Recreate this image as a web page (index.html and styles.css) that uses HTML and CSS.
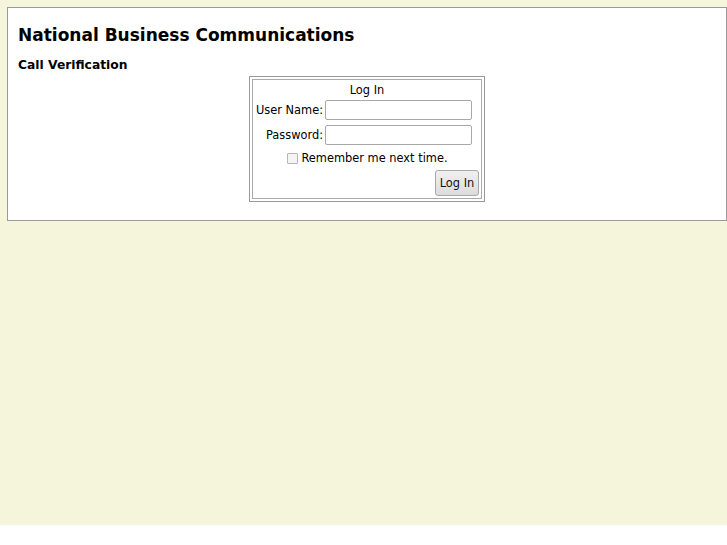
FILE: index.html
```html
<!DOCTYPE html>
<html>
<head>
<meta charset="utf-8">
<title>Call Verification</title>
<link rel="stylesheet" href="styles.css">
</head>
<body>
<div class="page">
  <div class="panel">
    <h1 class="title">National Business Communications</h1>
    <h2 class="subtitle">Call Verification</h2>
    <div class="login-wrap">
      <form class="login">
        <div class="login-inner">
          <div class="login-title">Log In</div>
          <label class="lbl" for="un">User Name:</label>
          <input class="field" id="un" type="text">
          <label class="lbl" for="pw">Password:</label>
          <input class="field" id="pw" type="password">
          <div class="remember"><span class="check"></span><span>Remember me next time.</span></div>
          <div class="actions"><button type="button" class="btn">Log In</button></div>
        </div>
      </form>
    </div>
  </div>
</div>
</body>
</html>
```
FILE: styles.css
```css
html { background: #fff; }
body {
  margin: 0;
  font-family: "DejaVu Sans", Verdana, sans-serif;
  color: #000;
}
.page {
  background: #f5f5dc;
  height: 525px;
  padding: 7px 0 0 7px;
  box-sizing: border-box;
}
.panel {
  background: #fff;
  border: 1px solid #9a9a9a;
  height: 214px;
  box-sizing: border-box;
  padding: 17px 10px 0 10px;
}
.title {
  margin: 0;
  font-size: 17px;
  font-weight: bold;
  line-height: 20px;
}
.subtitle {
  margin: 13px 0 0 0;
  font-size: 12.3px;
  font-weight: bold;
  line-height: 15px;
}
.login-wrap {
  display: flex;
  justify-content: center;
  margin-top: 3px;
}
.login {
  border: 1px solid #999;
  padding: 2px;
  margin: 0;
}
.login-inner {
  border: 1px solid #aaa;
  width: 230px;
  height: 120px;
  box-sizing: border-box;
  display: grid;
  grid-template-columns: 71px 1fr;
  grid-template-rows: 19px 25px 25px 18px 31px;
  column-gap: 1px;
  font-size: 11.4px;
}
.login-title {
  grid-column: 1 / 3;
  text-align: center;
  line-height: 14px;
  padding-top: 3px;
}
.lbl {
  text-align: right;
  align-self: start;
  margin-top: 4px;
  padding-right: 1px;
  line-height: 14px;
}
.field {
  align-self: start;
  justify-self: start;
  margin: 1px 0 0 0;
  width: 147px;
  height: 20px;
  box-sizing: border-box;
  border: 1px solid #a8a8a8;
  border-radius: 2px;
  padding: 0 3px;
  background: #fff;
  font: inherit;
}
.remember {
  grid-column: 1 / 3;
  display: flex;
  justify-content: center;
  align-items: center;
  gap: 3px;
  padding-left: 1px;
}
.check {
  width: 11px;
  height: 11px;
  box-sizing: border-box;
  border: 1px solid #b5b5b5;
  background: #f4f4f4;
  border-radius: 1px;
}
.actions {
  grid-column: 1 / 3;
  display: flex;
  justify-content: flex-end;
  align-items: center;
  padding-right: 2px;
}
.btn {
  width: 44px;
  height: 26px;
  border: 1px solid #a9a9a9;
  border-radius: 3px;
  background: linear-gradient(#f0f0f0, #dcdcdc);
  font: inherit;
  color: #111;
  padding: 0;
}
```
